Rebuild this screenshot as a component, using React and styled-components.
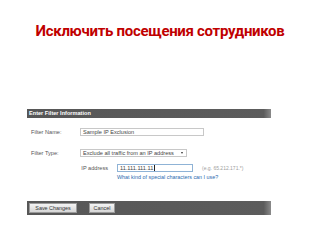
import React from "react";
import styled, { createGlobalStyle } from "styled-components";

const GlobalStyle = createGlobalStyle`
  html, body {
    margin: 0;
    padding: 0;
    background: #ffffff;
  }
  body {
    font-family: "Liberation Sans", Arial, sans-serif;
  }
`;

const Page = styled.div`
  width: 320px;
  height: 240px;
  overflow: hidden;
  background: #ffffff;
`;

const Title = styled.h1`
  margin: 0;
  height: 41px;
  padding-top: 21px;
  box-sizing: border-box;
  text-align: center;
  font-family: Roboto, "Noto Sans", sans-serif;
  font-weight: 700;
  font-size: 15px;
  letter-spacing: -0.3px;
  line-height: 20px;
  color: #c00000;
`;

const Panel = styled.div`
  margin: 68px 0 0 27px;
  width: 244px;
`;

const Bar = styled.div`
  display: flex;
  align-items: center;
  height: ${(p) => p.$h}px;
  background: linear-gradient(to right, #575757 0, #5c5c5c 97%, #8a8a8a 100%);
  padding-left: 2px;
  gap: ${(p) => p.$gap || 0}px;
`;

const BarTitle = styled.span`
  color: #ffffff;
  font-weight: 700;
  font-size: 5.6px;
  line-height: 9px;
`;

const Body = styled.div`
  padding: 10px 0 0 4px;
  height: 83px;
  box-sizing: border-box;
  overflow: hidden;
`;

const Row = styled.div`
  display: grid;
  grid-template-columns: 49px auto;
  align-items: center;
  height: 8px;
  margin-bottom: ${(p) => p.$mb || 0}px;
`;

const Label = styled.span`
  font-size: 5.6px;
  line-height: 8px;
  color: #555555;
`;

const Field = styled.div`
  width: ${(p) => p.$w}px;
  height: 8px;
  box-sizing: border-box;
  border: 1px solid ${(p) => (p.$focus ? "#8fb3d6" : "#c8c8c8")};
  background: #ffffff;
  font-size: 5.6px;
  line-height: 6px;
  color: #444444;
  display: flex;
  align-items: center;
  padding-left: 2px;
  justify-content: space-between;
`;

const Arrow = styled.span`
  width: 0;
  height: 0;
  border-left: 1.5px solid transparent;
  border-right: 1.5px solid transparent;
  border-top: 2px solid #333;
  margin-right: 3px;
`;

const Sub = styled.div`
  display: grid;
  grid-template-columns: 77px auto 1fr;
  column-gap: 9px;
  align-items: center;
  height: 8px;
`;

const SubLabel = styled(Label)`
  text-align: right;
`;

const Hint = styled.span`
  font-size: 5px;
  line-height: 8px;
  color: #a0a0a0;
`;

const Caret = styled.span`
  display: inline-block;
  vertical-align: middle;
  width: 0.6px;
  height: 6px;
  background: #222;
  margin-left: 0.5px;
`;

const HelpLink = styled.div`
  font-size: 5.4px;
  line-height: 7px;
  color: #2a6bb0;
  margin: 2px 0 0 86px;
`;

const Button = styled.div`
  height: 10px;
  width: ${(p) => p.$w}px;
  display: flex;
  align-items: center;
  justify-content: center;
  background: linear-gradient(#f4f4f4, #d6d6d6);
  border: 1px solid #9a9a9a;
  box-sizing: border-box;
  font-size: 5.4px;
  color: #333333;
`;

export default function App() {
  return (
    <Page>
      <GlobalStyle />
      <Title>Исключить посещения сотрудников</Title>
      <Panel>
        <Bar $h={9}>
          <BarTitle>Enter Filter Information</BarTitle>
        </Bar>
        <Body>
          <Row $mb={13}>
            <Label>Filter Name:</Label>
            <Field $w={124}>Sample IP Exclusion</Field>
          </Row>
          <Row $mb={7}>
            <Label>Filter Type:</Label>
            <Field $w={107}>
              Exclude all traffic from an IP address
              <Arrow />
            </Field>
          </Row>
          <Sub>
            <SubLabel>IP address</SubLabel>
            <Field $w={76} $focus>
              <span>
                11.111.111.11
                <Caret />
              </span>
            </Field>
            <Hint>(e.g. 65.212.171.*)</Hint>
          </Sub>
          <HelpLink>What kind of special characters can I use?</HelpLink>
        </Body>
        <Bar $h={14} $gap={12}>
          <Button $w={48}>Save Changes</Button>
          <Button $w={26}>Cancel</Button>
        </Bar>
      </Panel>
    </Page>
  );
}
